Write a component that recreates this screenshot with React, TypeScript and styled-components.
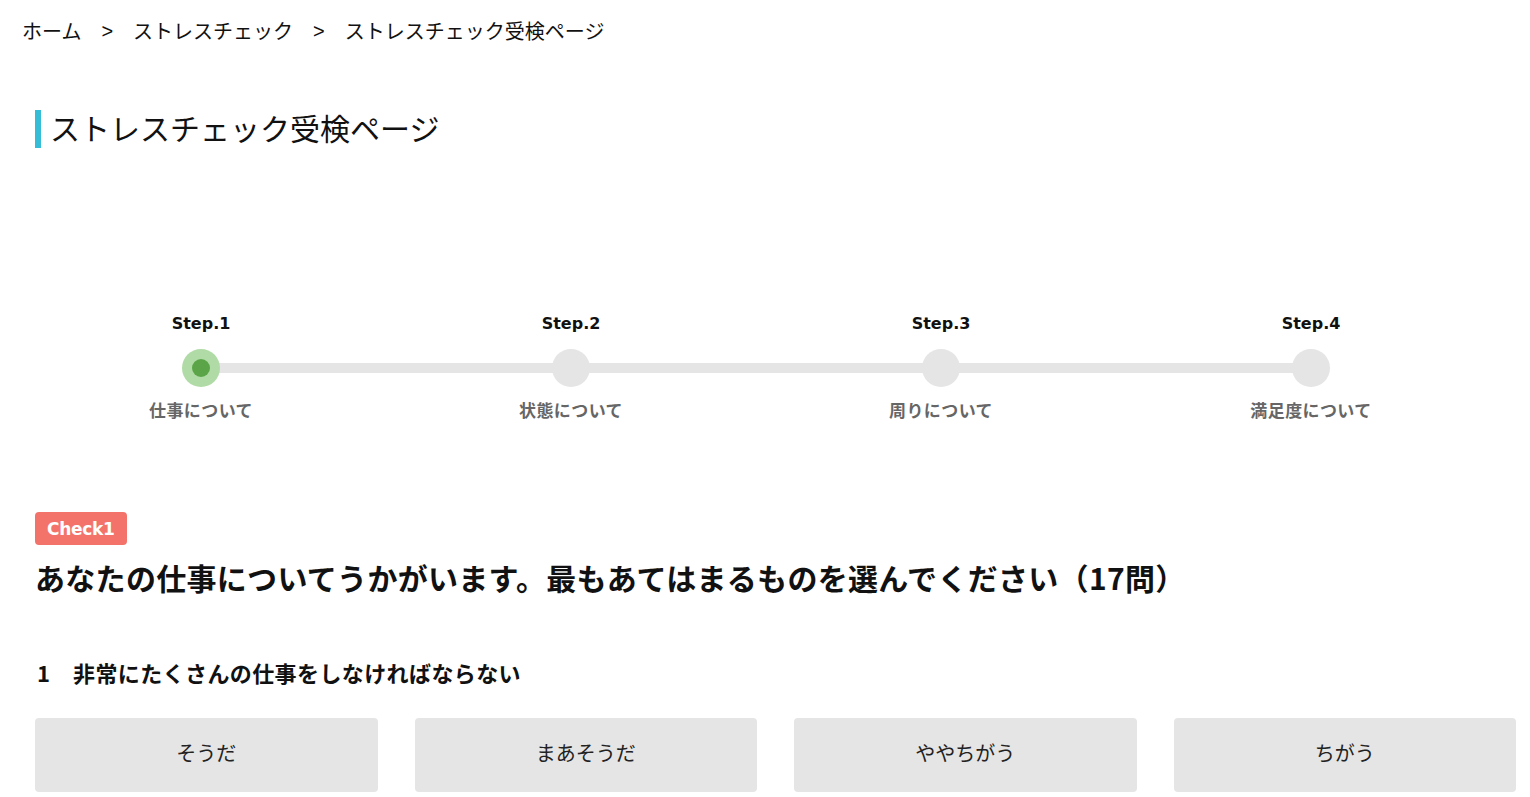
import React from "react";
import styled, { createGlobalStyle } from "styled-components";

const GlobalStyle = createGlobalStyle`
  html, body { margin: 0; padding: 0; background: #fff; }
  body {
    font-family: "Noto Sans CJK JP", "Noto Sans", sans-serif;
    color: #111;
  }
  * { box-sizing: border-box; }
`;

const Page = styled.div`
  width: 1530px;
  padding: 0 14px 0 35px;
  overflow: hidden;
`;

const Breadcrumb = styled.nav`
  display: flex;
  align-items: center;
  gap: 20px;
  margin: 16px 0 0 -13px;
  font-size: 20px;
  line-height: 30px;
  color: #111;
`;

const Crumb = styled.span``;

const Sep = styled.span`
  font-family: "Liberation Sans", sans-serif;
  font-size: 20px;
`;

const Title = styled.h1`
  margin: 64px 0 0;
  border-left: 6px solid #35bdd8;
  padding: 0 0 4px 9px;
  font-size: 30px;
  line-height: 34px;
  font-weight: 400;
  letter-spacing: 0;
`;

const Steps = styled.ol`
  list-style: none;
  margin: 164px 0 0 -19px;
  padding: 0;
  width: 1480px;
  display: grid;
  grid-template-columns: repeat(4, 1fr);
`;

const StepItem = styled.li<{ $last?: boolean }>`
  position: relative;
  display: flex;
  flex-direction: column;
  align-items: center;
  &::before {
    content: "";
    display: ${(p) => (p.$last ? "none" : "block")};
    position: absolute;
    left: 50%;
    width: 100%;
    top: 51px;
    height: 10px;
    background: #e5e5e5;
    z-index: 0;
  }
`;

const StepNo = styled.div`
  font-family: "DejaVu Sans", sans-serif;
  font-weight: 700;
  font-size: 16px;
  line-height: 24px;
  color: #111;
`;

const Dot = styled.div<{ $active?: boolean }>`
  position: relative;
  z-index: 1;
  margin-top: 13px;
  width: 38px;
  height: 38px;
  border-radius: 50%;
  background: ${(p) => (p.$active ? "#b1dba6" : "#e5e5e5")};
  display: flex;
  align-items: center;
  justify-content: center;
  &::after {
    content: "";
    display: ${(p) => (p.$active ? "block" : "none")};
    width: 18px;
    height: 18px;
    border-radius: 50%;
    background: #5ba548;
  }
`;

const StepLabel = styled.div`
  margin-top: 11px;
  font-size: 17px;
  line-height: 24px;
  font-weight: 700;
  letter-spacing: 0.4px;
  color: #666;
`;

const Badge = styled.span`
  display: inline-flex;
  align-items: center;
  margin-top: 90px;
  height: 33px;
  padding: 0 12px;
  border-radius: 4px;
  background: #f3736a;
  color: #fff;
  font-family: "DejaVu Sans", sans-serif;
  font-weight: 700;
  font-size: 17px;
  letter-spacing: -0.3px;
`;

const Heading = styled.h2`
  margin: 12px 0 0;
  font-size: 30px;
  line-height: 40px;
  font-weight: 700;
  letter-spacing: 0.3px;
`;

const Question = styled.h3`
  margin: 60px 0 0;
  display: flex;
  font-size: 22px;
  line-height: 30px;
  font-weight: 700;
  letter-spacing: 0.4px;
`;

const QNum = styled.span`
  width: 38px;
  padding-left: 2px;
`;

const Options = styled.div`
  margin-top: 31px;
  display: grid;
  grid-template-columns: repeat(4, 1fr);
  column-gap: 37px;
`;

const Option = styled.button`
  height: 74px;
  border: none;
  border-radius: 4px;
  padding: 0 0 5px;
  background: #e5e5e5;
  font-family: inherit;
  font-size: 20px;
  color: #222;
  cursor: pointer;
`;

const steps = [
  { no: "Step.1", label: "仕事について", active: true },
  { no: "Step.2", label: "状態について" },
  { no: "Step.3", label: "周りについて" },
  { no: "Step.4", label: "満足度について" },
];

const options = ["そうだ", "まあそうだ", "ややちがう", "ちがう"];

export default function App() {
  return (
    <>
      <GlobalStyle />
      <Page>
        <Breadcrumb>
          <Crumb>ホーム</Crumb>
          <Sep>&gt;</Sep>
          <Crumb>ストレスチェック</Crumb>
          <Sep>&gt;</Sep>
          <Crumb>ストレスチェック受検ページ</Crumb>
        </Breadcrumb>
        <Title>ストレスチェック受検ページ</Title>
        <Steps>
          {steps.map((s, i) => (
            <StepItem key={s.no} $last={i === steps.length - 1}>
              <StepNo>{s.no}</StepNo>
              <Dot $active={s.active} />
              <StepLabel>{s.label}</StepLabel>
            </StepItem>
          ))}
        </Steps>
        <Badge>Check1</Badge>
        <Heading>あなたの仕事についてうかがいます。最もあてはまるものを選んでください（17問）</Heading>
        <Question>
          <QNum>1</QNum>
          非常にたくさんの仕事をしなければならない
        </Question>
        <Options>
          {options.map((o) => (
            <Option key={o}>{o}</Option>
          ))}
        </Options>
      </Page>
    </>
  );
}
